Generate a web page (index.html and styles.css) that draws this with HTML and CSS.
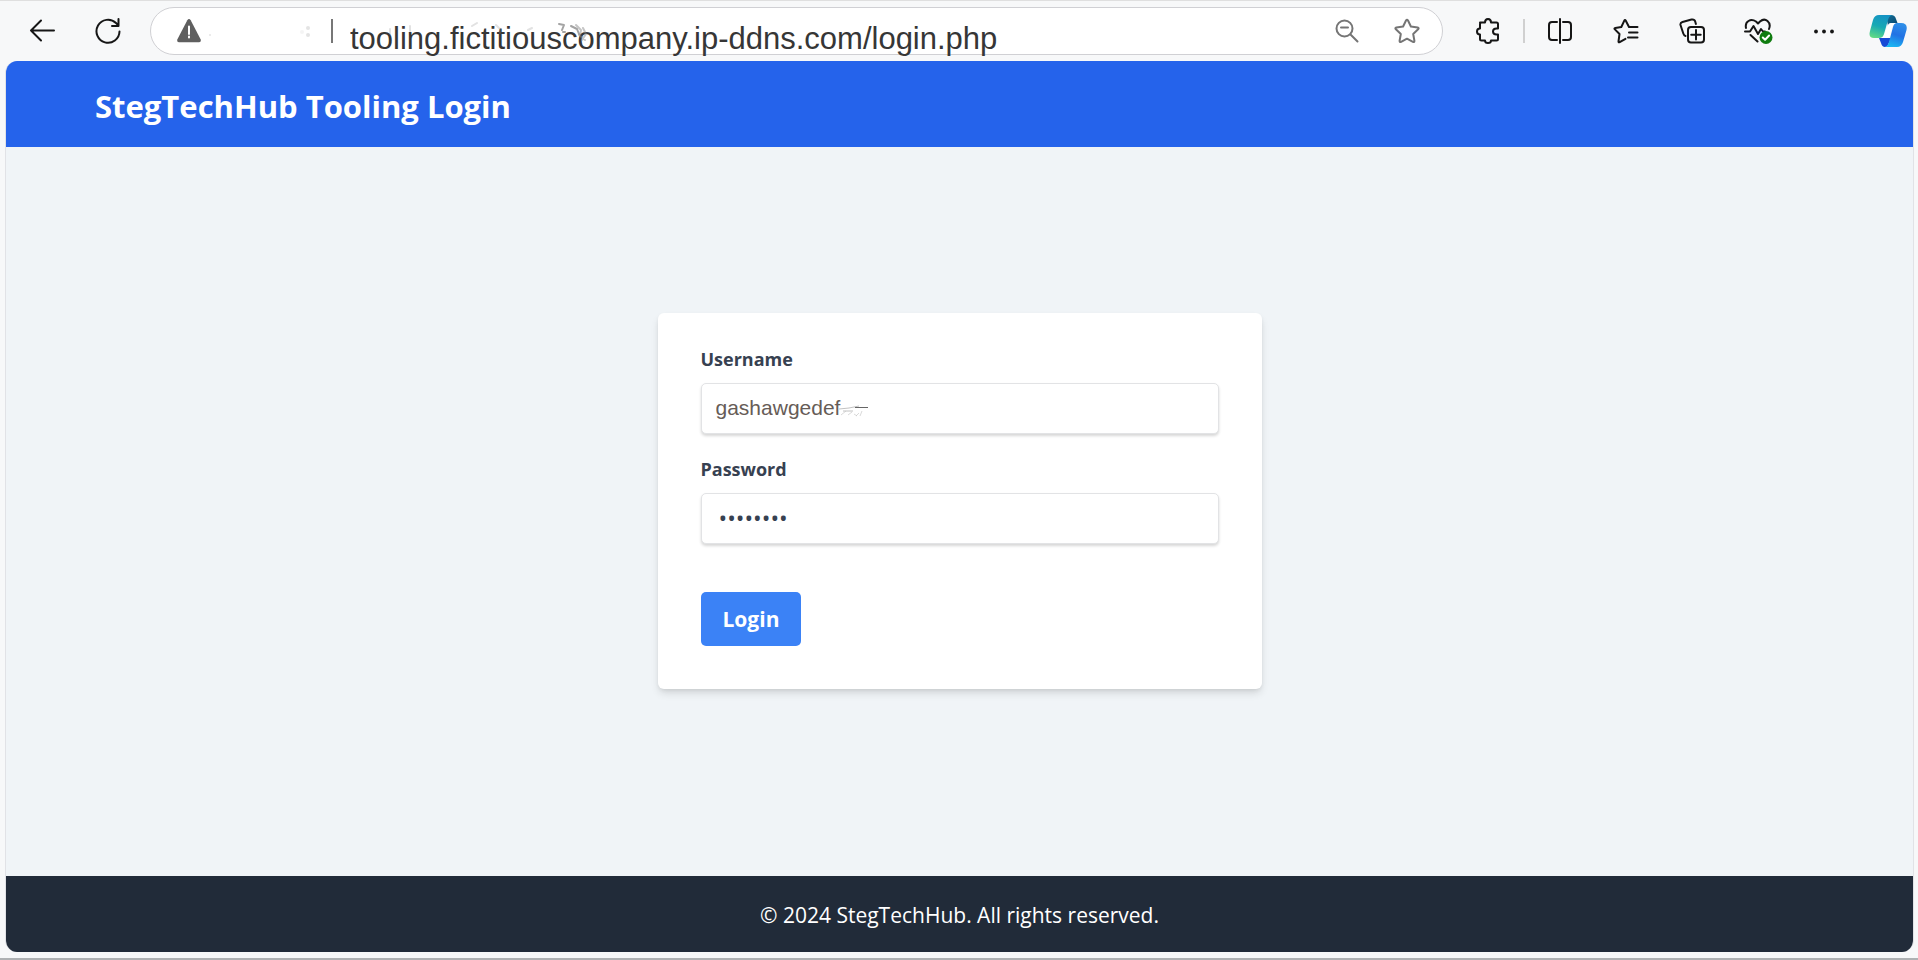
FILE: index.html
```html
<!DOCTYPE html>
<html lang="en">
<head>
<meta charset="utf-8">
<title>StegTechHub Tooling Login</title>
<link rel="stylesheet" href="styles.css">
</head>
<body>
<div class="browser">
  <nav class="toolbar" aria-label="Browser toolbar">
    <button class="tool" type="button" aria-label="Back">
      <svg width="26" height="26" viewBox="0 0 26 26"><path d="M25 12.500H2M12 2.500L2 12.500l10 10"/></svg>
    </button>
    <button class="tool" type="button" aria-label="Refresh">
      <svg width="26" height="26" viewBox="0 0 26 26"><path d="M24.500 13.500A11.500 11.500 0 1 1 21 5l2.500 2.500M23.500 1v7H17"/></svg>
    </button>
    <div class="address">
      <button class="site-info" type="button" aria-label="Not secure">
        <svg width="26" height="26" viewBox="0 0 26 26"><path class="warn" d="M11.300 2.200Q13 0 14.700 2.200L24.700 21.500Q25.300 24.300 23 24.300H3Q.7 24.300 1.300 21.500Z"/><path class="warn-mark" d="M13 8.500v7.500M13 18.500v1"/></svg>
        <svg class="residue" width="110" height="26" viewBox="0 0 110 26"><circle cx="8" cy="17" r="1"/><circle cx="106" cy="10" r="2"/><circle cx="106" cy="17" r="2"/><circle cx="100" cy="14" r="2" opacity=".4"/></svg>
      </button>
      <span class="address-rule"></span>
      <div class="url-box">
        <input class="url" type="text" aria-label="Address" value="tooling.fictitiouscompany.ip-ddns.com/login.php">
        <svg class="url-smudge" width="220" height="22" viewBox="0 0 220 22"><path opacity=".25" d="M40 6v5M60 3v5M122 3l5-3M146 2l4 4v4M178 7l4-2"/><path opacity=".8" d="M209 1l5 1-2 5M213 9h2M221 3l6 3 2 5"/><path opacity=".5" d="M226 2l5 5-1 6M233 5l3 6-4 6M229 12l6 5"/></svg>
      </div>
      <button class="in-address" type="button" aria-label="Zoom out">
        <svg width="26" height="26" viewBox="0 0 26 26"><circle cx="10.500" cy="10.500" r="8"/><path d="M7 9.500h7M16.500 16.500l7 7"/></svg>
      </button>
      <button class="in-address" type="button" aria-label="Add to favorites">
        <svg width="26" height="26" viewBox="0 0 26 26"><path d="M12 2.500q1-1.600 2 0l2.900 6 6.700 1q1.800.4.500 1.800l-4.900 4.700 1.200 6.700q.1 1.800-1.500 1.100L13 20.700l-5.900 3.100q-1.600.7-1.500-1.100l1.200-6.700-4.900-4.700q-1.300-1.400.5-1.800l6.700-1z"/></svg>
      </button>
    </div>
    <button class="tool" type="button" aria-label="Extensions">
      <svg width="26" height="26" viewBox="0 0 26 26"><path d="M5 4.500h5q0-3.500 3-3.500t3 3.500h5.500q1.500 0 1.500 1.500v4.500h-1.500q-3.500 0-3.500 3t3.500 3H23V21q0 1.500-1.500 1.500H16q0 2.500-3 2.500t-3-2.500H6.500Q5 22.500 5 21v-4.500q-3 0-3-3t3-3V6q0-1.500 1.500-1.500"/></svg>
    </button>
    <span class="tool-rule"></span>
    <button class="tool" type="button" aria-label="Split screen">
      <svg width="26" height="26" viewBox="0 0 26 26"><path d="M13 1v24M10 4H5Q2 4 2 7v12q0 3 3 3h5M16 4h5q3 0 3 3v12q0 3-3 3h-5"/></svg>
    </button>
    <button class="tool" type="button" aria-label="Favorites">
      <svg width="26" height="26" viewBox="0 0 26 26"><path d="M24.500 9H16l-3.200-6.200q-.8-1.500-1.600 0L8.300 9l-6 .9q-1.500.3-.4 1.500L6.500 16l-1 7.500q0 1.200 1.200.7l5.800-3.300M16 14.500h8.500M15 19.500h9.500"/></svg>
    </button>
    <button class="tool" type="button" aria-label="Collections">
      <svg width="26" height="26" viewBox="0 0 26 26"><rect x="9" y="9" width="16" height="15.500" rx="3"/><path d="M17 12v9.500M12.200 16.800h9.500M6.500 18q-1.500-.4-2.200-2.500L1.500 7Q1 4.800 3.500 4L12.500 1.500Q15.500 1 16.200 3.500l.7 2.500"/></svg>
    </button>
    <button class="tool" type="button" aria-label="Browser essentials">
      <svg width="30" height="28" viewBox="0 0 30 28"><path d="M3 11Q2 6 5.500 4T13 4.500l2 2 2-2q4-3.500 7.500-.5T26 12M2 14.500h5l3.500-5.500 4.500 8 3-5 2 2.500h2M7.500 18l7 6.500"/><circle class="ok" cx="23" cy="20.500" r="6.500"/><path class="ok-mark" d="M19.800 20.500l2.300 2.300 4-4.300"/></svg>
    </button>
    <button class="tool" type="button" aria-label="Settings and more">
      <svg width="26" height="26" viewBox="0 0 26 26"><g class="dots"><circle cx="5" cy="13.500" r="1.900"/><circle cx="13" cy="13.500" r="1.900"/><circle cx="21" cy="13.500" r="1.900"/></g></svg>
    </button>
    <button class="tool tool-last" type="button" aria-label="Copilot">
      <svg width="38" height="34" viewBox="0 0 38 34">
        <defs>
          <linearGradient id="teal" x1=".6" y1="0" x2=".3" y2="1"><stop offset="0" stop-color="#1593c4"/><stop offset=".5" stop-color="#18a9b4"/><stop offset="1" stop-color="#5fd886"/></linearGradient>
          <linearGradient id="sky" x1=".7" y1="0" x2=".4" y2="1"><stop offset="0" stop-color="#2f8fe8"/><stop offset=".5" stop-color="#2272e4"/><stop offset="1" stop-color="#1ab5f2"/></linearGradient>
          <linearGradient id="navy" x1="0" y1="0" x2="1" y2="1"><stop offset="0" stop-color="#14729a"/><stop offset="1" stop-color="#08436c"/></linearGradient>
        </defs>
        <g class="copilot">
          <path fill="url(#navy)" d="M17 1h5q4 0 5 4l1.500 4H23q-3 0-4 3z"/>
          <path fill="#1749d6" d="M10 24h12l-3 7q-1 2-3 2-3 0-4-4z"/>
          <path fill="url(#teal)" d="M10 1h13q-3 1-4 5l-4 14q-1 4-5 4H5q-6 0-4-7L4 6q1.500-5 6-5z"/>
          <path fill="url(#sky)" d="M28 9h4q7 0 5.500 7L34 28q-1.500 5-6 5H16q3-1 4-5l4-15q1-4 4-4z"/>
          <path fill="#fff" d="M19.500 10q1-1 3-1h4q-2.500 1-3.500 4l-2.500 9q-.7 2-3 2h-5q2-1 3-4z"/>
        </g>
      </svg>
    </button>
  </nav>

  <div class="page">
    <header class="page-header"><h1 class="title">StegTechHub Tooling Login</h1></header>
    <main class="content">
      <form class="card">
        <div class="field">
          <label class="label" for="username">Username</label>
          <div class="input-wrap">
            <input class="input username" id="username" type="text" value="gashawgedef">
            <svg class="input-smudge" width="30" height="14" viewBox="0 0 30 14"><path d="M0 4l10-1 10-2M4 6h10"/><path class="heavy" d="M16 2.500h13"/><path opacity=".6" d="M2 10l5-4M9 10l4-3M15 9l3 2M20 8l-3 3M23 6l-2 5"/></svg>
          </div>
        </div>
        <div class="field">
          <label class="label" for="password">Password</label>
          <input class="input password" id="password" type="password" value="password">
        </div>
        <button class="login" type="button">Login</button>
      </form>
    </main>
    <footer class="page-footer">© 2024 StegTechHub. All rights reserved.</footer>
  </div>
</div>
</body>
</html>
```
FILE: styles.css
```css
*, *::before, *::after { box-sizing: border-box; }

body {
  margin: 0;
  background: #f7f8f9;
  font-family: "Open Sans", "Noto Sans", sans-serif;
}

button, input { font: inherit; }
button { cursor: pointer; }

.browser {
  display: flex;
  flex-direction: column;
  min-height: 100vh;
  padding-bottom: 6px;
  border-top: 1px solid #dfdfdf;
  border-bottom: 2px solid #aeb1b3;
}

/* Toolbar */
.toolbar {
  display: flex;
  align-items: center;
  height: 60px;
  padding-left: 9px;
}

.tool, .in-address, .site-info {
  display: flex;
  align-items: center;
  justify-content: center;
  flex: none;
  padding: 0;
  border: 0;
  background: none;
}

.tool { width: 66px; height: 48px; }
.tool-last { width: 61px; }
.in-address { width: 60px; height: 44px; }

.toolbar svg {
  fill: none;
  stroke: #161616;
  stroke-width: 2;
  stroke-linecap: round;
  stroke-linejoin: round;
}
.toolbar .in-address svg { stroke: #757575; }
.toolbar .copilot, .toolbar .dots { stroke: none; }
.toolbar .dots { fill: #161616; }
.toolbar .warn { fill: #5f5f5f; stroke: none; }
.toolbar .warn-mark { stroke: #fff; }
.toolbar .ok { fill: #107c10; stroke: none; }
.toolbar .ok-mark { stroke: #fff; }

.tool-rule {
  flex: none;
  width: 2px;
  height: 24px;
  margin: 0 2px;
  background: #d0d0d0;
}

.address {
  display: flex;
  align-items: center;
  flex: 1;
  min-width: 0;
  height: 48px;
  margin: 0 12px 0 9px;
  padding: 0 5px 0 25px;
  border: 1px solid #d0d0d4;
  border-radius: 24px;
  background: #fff;
}

.toolbar .residue { fill: #e4e4e4; stroke: none; }

.address-rule {
  flex: none;
  width: 2px;
  height: 24px;
  margin-left: 19px;
  background: #777;
}

.url-box {
  position: relative;
  flex: 1;
  min-width: 0;
}

.url {
  display: block;
  width: 100%;
  height: 36px;
  margin-top: 16px;
  padding: 0 0 0 17px;
  border: 0;
  outline: 0;
  background: none;
  color: #363636;
  font-family: "Liberation Sans", Arial, sans-serif;
  font-size: 31px;
  line-height: 36px;
}

.toolbar .url-smudge {
  position: absolute;
  top: 18px;
  left: 17px;
  overflow: visible;
  stroke: #8c8c8c;
}

/* Page */
.page {
  display: flex;
  flex-direction: column;
  flex: 1;
  margin: 0 4px 0 5px;
  overflow: hidden;
  border: 1px solid #e1e2e6;
  border-top: 0;
  border-bottom: 0;
  border-radius: 12px;
  background: #f0f4f7;
}

.page-header {
  padding: 24px 89px 20px;
  background: #2563eb;
  color: #fff;
}

.title {
  margin: 0;
  font-size: 31px;
  font-weight: 700;
  line-height: 42px;
}

.content {
  display: flex;
  align-items: center;
  justify-content: center;
  flex: 1;
  padding: 24px;
}

.card {
  width: 100%;
  max-width: 604px;
  margin-bottom: 22px;
  padding: 32px 43px 43px;
  border-radius: 6px;
  background: #fff;
  box-shadow: 0 5px 8px -1px rgba(0, 0, 0, .12), 0 2px 4px -1px rgba(0, 0, 0, .08);
}

.field { margin-bottom: 21px; }

.label {
  display: block;
  margin-bottom: 10px;
  color: #374151;
  font-size: 18px;
  font-weight: 700;
  line-height: 28px;
}

.input-wrap { position: relative; }

.input {
  display: block;
  width: 100%;
  height: 51px;
  padding: 0 15px;
  border: 1px solid #e2e3e5;
  border-radius: 5px;
  outline: 0;
  background: #fff;
  box-shadow: 0 2px 3px rgba(0, 0, 0, .16);
  color: #374151;
}

.username {
  padding: 0 14px;
  color: #665c57;
  font-family: "Liberation Sans", Arial, sans-serif;
  font-size: 21px;
}

.password { padding: 0 17px; font-size: 23px; }

.input-smudge {
  position: absolute;
  top: 22px;
  left: 138px;
  fill: none;
  stroke: #c2c2c2;
}
.heavy { stroke: #666; }

.login {
  display: block;
  height: 54px;
  margin-top: 48px;
  padding: 0 22px;
  border: 0;
  border-radius: 5px;
  background: #3b82f6;
  color: #fff;
  font-size: 21px;
  font-weight: 700;
}

.page-footer {
  padding: 25px 24px 23px;
  background: #212b39;
  color: #fff;
  font-size: 21px;
  line-height: 28px;
  text-align: center;
}
```
